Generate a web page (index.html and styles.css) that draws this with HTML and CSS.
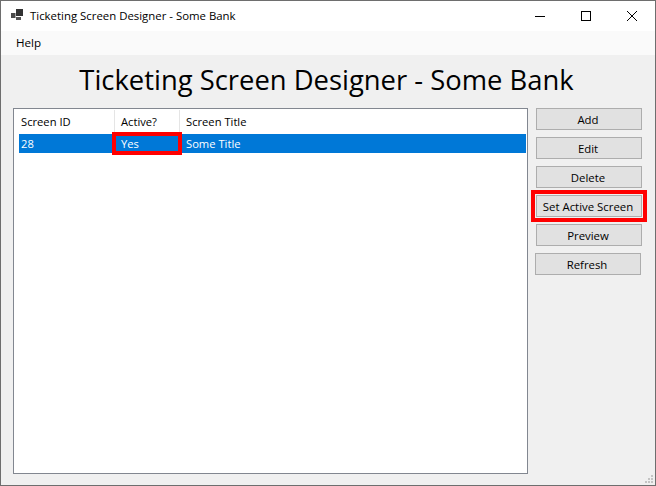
FILE: index.html
```html
<!DOCTYPE html>
<html lang="en">
<head>
    <meta charset="UTF-8">
    <meta name="viewport" content="width=device-width, initial-scale=1.0">
    <title>Ticketing Screen Designer - Some Bank</title>
    <link rel="stylesheet" href="styles.css">
</head>
<body>
    <div class="window">
        <div class="titlebar">
            <svg class="app_icon" width="16" height="16" viewBox="0 0 16 16">
                <rect x="1" y="5" width="4.5" height="5" fill="#4a4a4a"/>
                <rect x="6" y="1" width="7" height="7" fill="#333"/>
                <rect x="6" y="9" width="5" height="3" fill="#555"/>
            </svg>
            <span class="title_text">Ticketing Screen Designer - Some Bank</span>
            <div class="win_buttons">
                <svg class="win_btn" width="46" height="30" viewBox="0 0 46 30">
                    <path d="M18 15.5H28" stroke="#000" fill="none"/>
                </svg>
                <svg class="win_btn" width="46" height="30" viewBox="0 0 46 30">
                    <rect x="18.5" y="10.5" width="9" height="9" stroke="#000" fill="none"/>
                </svg>
                <svg class="win_btn" width="46" height="30" viewBox="0 0 46 30">
                    <path d="M18 10L28 20M28 10L18 20" stroke="#000" fill="none"/>
                </svg>
            </div>
        </div>

        <div class="menubar">
            <span class="menu_item">Help</span>
        </div>

        <h1 class="heading">Ticketing Screen Designer - Some Bank</h1>

        <div class="content">
            <div class="list">
                <div class="list_row list_header">
                    <div class="col col_id">Screen ID</div>
                    <div class="col col_active">Active?</div>
                    <div class="col col_title">Screen Title</div>
                </div>
                <div class="list_row list_selected">
                    <div class="col col_id">28</div>
                    <div class="col col_active marked_cell">Yes</div>
                    <div class="col col_title">Some Title</div>
                </div>
            </div>

            <div class="buttons">
                <button class="btn">Add</button>
                <button class="btn">Edit</button>
                <button class="btn">Delete</button>
                <button class="btn btn_marked">Set Active Screen</button>
                <button class="btn">Preview</button>
                <button class="btn btn_shifted">Refresh</button>
            </div>
        </div>

        <svg class="grip" width="12" height="12" viewBox="0 0 12 12" fill="#c4c4c4">
            <rect x="8" y="2" width="2" height="2"/>
            <rect x="5" y="5" width="2" height="2"/>
            <rect x="8" y="5" width="2" height="2"/>
            <rect x="2" y="8" width="2" height="2"/>
            <rect x="5" y="8" width="2" height="2"/>
            <rect x="8" y="8" width="2" height="2"/>
        </svg>
    </div>
</body>
</html>
```

FILE: styles.css
```css
html, body{
    margin: 0;
    padding: 0;
}

body{
    width: 656px;
    height: 486px;
    overflow: hidden;
    font-family: 'Open Sans', 'Noto Sans', sans-serif;
    font-size: 11.2px;
    color: #000;
}

.window{
    position: relative;
    box-sizing: border-box;
    width: 656px;
    height: 486px;
    border: 1px solid #6e6e6e;
    background-color: #f0f0f0;
    display: flex;
    flex-direction: column;
}

.titlebar{
    height: 30px;
    flex: none;
    background-color: #fff;
    display: flex;
    align-items: center;
    padding-left: 9px;
}

.app_icon{
    flex: none;
}

.title_text{
    margin-left: 4px;
    margin-top: -2px;
    font-size: 11.4px;
}

.win_buttons{
    margin-left: auto;
    display: flex;
}

.win_btn{
    display: block;
}

.menubar{
    box-sizing: border-box;
    height: 24px;
    flex: none;
    background-color: #fafafa;
    display: flex;
    align-items: center;
    padding: 0 0 2px 15px;
    font-size: 11.6px;
}

.heading{
    margin: 5px 0 0 0;
    padding-right: 3px;
    height: 48px;
    flex: none;
    text-align: center;
    font-weight: 400;
    font-size: 27.4px;
    line-height: 40px;
}

.content{
    display: flex;
    padding-left: 12px;
}

.list{
    box-sizing: border-box;
    width: 515px;
    height: 366px;
    flex: none;
    background-color: #fff;
    border: 1px solid #828790;
    padding: 1px 1px 0 5px;
}

.list_row{
    display: flex;
}

.list_header{
    height: 23px;
    margin-bottom: 1px;
    align-items: center;
}

.list_header .col{
    height: 23px;
    line-height: 23px;
    border-right: 1px solid #e5e5e5;
    box-sizing: border-box;
}

.list_header .col_title{
    border-right: none;
}

.list_selected{
    height: 19px;
    background-color: #0078d7;
    color: #fff;
    line-height: 19px;
}

.col{
    box-sizing: border-box;
    padding-left: 2px;
}

.col_id{
    width: 96px;
}

.col_active{
    width: 65px;
    padding-left: 6px;
}

.col_title{
    flex: 1;
    padding-left: 6px;
}

.marked_cell{
    outline: 4px solid #ff0000;
    outline-offset: -2px;
    margin-left: -1px;
    padding-left: 7px;
    width: 66px;
}

.buttons{
    margin-left: 8px;
    display: flex;
    flex-direction: column;
    gap: 7px;
    padding-top: 0;
}

.btn{
    box-sizing: border-box;
    width: 106px;
    height: 22px;
    padding: 0 2px 0 0;
    background-color: #e1e1e1;
    border: 1px solid #adadad;
    font-family: inherit;
    font-size: 11.4px;
    color: #000;
}

.btn_marked{
    outline: 4px solid #ff0000;
    outline-offset: 1px;
}

.btn_shifted{
    margin-left: -1px;
}

.grip{
    position: absolute;
    right: 0;
    bottom: 0;
}
```
